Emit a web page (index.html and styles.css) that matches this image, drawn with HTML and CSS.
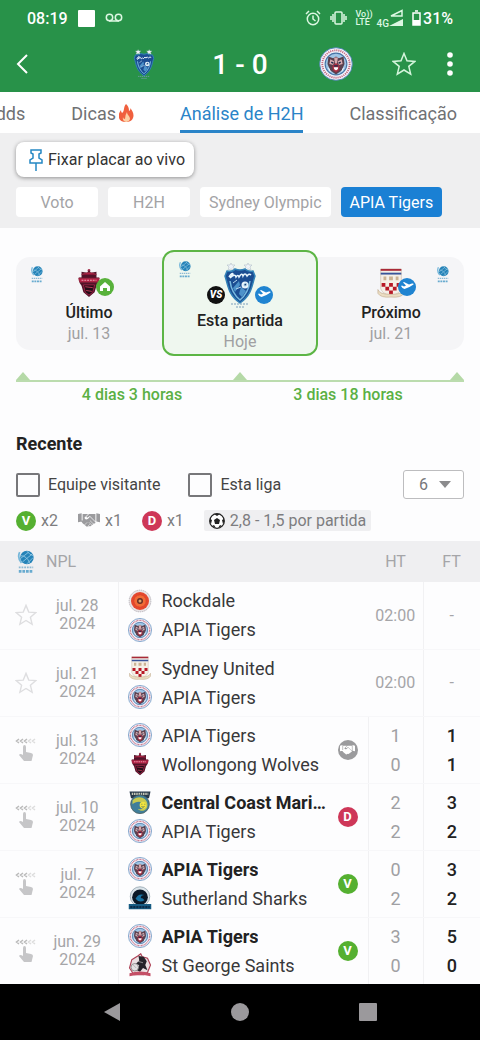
FILE: index.html
```
<!DOCTYPE html>
<html lang="pt">
<head>
    <meta charset="UTF-8">
    <meta name="viewport" content="width=device-width, initial-scale=1.0">
    <title>Análise de H2H</title>
    <link rel="stylesheet" href="styles.css">
</head>
<body>
    <!-- Shared icons and crests -->
    <svg class="sprite" aria-hidden="true">
        <symbol id="olympic" viewBox="0 0 38 46">
            <path d="M10 1l1 2 3 0-2 2 1 3-3-1-3 1 1-3-2-2 3 0zM27 1l1 2 3 0-2 2 1 3-3-1-3 1 1-3-2-2 3 0z" fill="#eef3f8" stroke="#b4bfc9" stroke-width=".6"/>
            <path d="M6 9q6 1 8-2 5 2 10 0 3 3 8 2l2 5c-3 9-3 19-15 27C7 33 7 23 4 14z" fill="#1b4d92" stroke="#3282b8" stroke-width="1.5"/>
            <path d="M9 19c1 8 4 14 10 19 6-5 9-11 10-19" fill="none" stroke="#79bce0" stroke-width="1.5"/>
            <path d="M8 15q3-5 4-3l-3 4q5-5 6-1 2-3 3 0 3-5 4-1 2-4 4 0 2-3 4-1" fill="none" stroke="#e8f5fd" stroke-width="1.5"/>
            <path d="M12 26l6-7 1 4-5 7zM18 32l2-7 5 4-4 6z" fill="#4d92ca"/>
            <circle cx="24" cy="23" r="3.5" fill="#e9f4fb"/>
            <path d="M24 21l2 1-1 2-2 0 0-2zM12 21l4-3M15 27l5-2" fill="#173e70" stroke="#b9daf0"/>
            <path d="M10 42h18M15 45h8" stroke="#7d9fbc" stroke-width="1.2" stroke-dasharray="2 1"/>
        </symbol>
        <symbol id="apia" viewBox="0 0 36 36">
            <circle cx="18" cy="18" r="17.3" fill="#f3f3fa" stroke="#4f82b6" stroke-width="1"/>
            <circle cx="18" cy="18" r="14.5" fill="none" stroke="#c4657c" stroke-width="2" stroke-dasharray="1.2 1"/>
            <circle cx="18" cy="18" r="11.5" fill="#9fc6e6" stroke="#4674a6" stroke-width="1.2"/>
            <path d="M10 10l5 2 3-2 3 2 5-2 1 8-3 7-6 4-6-4-3-7z" fill="#5a414f"/>
            <path d="M12 13l4 2-1 4-4-1zM24 13l-4 2 1 4 4-1zM16 11h4l-1 7h-2z" fill="#d8a9ae"/>
            <path d="M14 20l4-3 4 3-1 5-3 2-3-2z" fill="#a82d42"/>
            <path d="M16 22h4l-1 2h-2zM10 22l2 4M26 22l-2 4" fill="#fff" stroke="#fff"/>
            <path d="M13 16l2 1M23 16l-2 1M16 20h4" stroke="#172d4f" stroke-width="1.5"/>
        </symbol>
        <symbol id="wolves" viewBox="0 0 30 32">
            <circle cx="15" cy="2.5" r="1.5" fill="#a83a55"/>
            <path d="M15 2l2 3 6-1v6h3l-1 6-2 3-2 7-6 5-6-5-2-7-2-3-1-6h3V4l6 1z" fill="#521329"/>
            <path d="M7 7q8-4 16 0M4 11h22l-1 4H5z" fill="#b81d45" stroke="#9a2a43"/>
            <path d="M7 13h16" stroke="#e9a4b0" stroke-width="1.2" stroke-dasharray="2 1"/>
            <path d="M9 18h12l-2 8-4 3-4-3z" fill="#240d18" stroke="#a02547"/>
            <path d="M11 20l8 1M12 24l6 1" stroke="#c33b57"/>
        </symbol>
        <symbol id="united" viewBox="0 0 32 32">
            <path d="M5 1h22v21c-2 5-6 6-11 8-5-2-9-3-11-8z" fill="#f5efe7" stroke="#c8b6a3" stroke-width=".6"/>
            <path d="M5 1h22v2H5z" fill="#a92938"/>
            <path d="M5 5h22v2H5z" fill="#39549a"/>
            <path d="M8 11h3M14 11h4M21 11h3" stroke="#cbb293" stroke-width="4"/>
            <path d="M6 16h4v4H6zM14 16h4v4h-4zM22 16h4v4h-4zM10 20h4v4h-4zM18 20h4v4h-4zM14 24h4v4h-4z" fill="#b81827"/>
            <path d="M2 23q2 5 12 5h4q10 0 12-5v4q-3 5-14 4Q5 32 2 27z" fill="#eadcc2" stroke="#bda687" stroke-width=".6"/>
        </symbol>
        <symbol id="rockdale" viewBox="0 0 32 32">
            <circle cx="16" cy="16" r="14.5" fill="#e8e4e6" stroke="#aaa6ad" stroke-dasharray="2 1"/>
            <circle cx="16" cy="16" r="12" fill="#e4472d"/>
            <circle cx="16" cy="16" r="8" fill="#f16b36" stroke="#d13a28" stroke-dasharray="1 1"/>
            <circle cx="16" cy="16" r="4" fill="#692f25"/>
            <circle cx="16" cy="16" r="2" fill="#dda66f"/>
        </symbol>
        <symbol id="mariners" viewBox="0 0 32 32">
            <path d="M2 2h28l-2 9H4z" fill="#28394b"/>
            <path d="M5 5h22" stroke="#c7c9b8" stroke-width="3" stroke-dasharray="2 1"/>
            <circle cx="16" cy="19" r="12.5" fill="#3f7e9a" stroke="#4a5a58"/>
            <path d="M6 14c7-8 20-4 20 6 0 8-9 10-13 5 8 3 10-4 6-8-4-3-10-1-13 2z" fill="#c8ca50"/>
            <circle cx="20" cy="20" r="4.5" fill="#f2e43f"/>
            <path d="M18 19h1M22 19h1M18 22q2 2 4 0" stroke="#365a57" fill="none"/>
        </symbol>
        <symbol id="sharks" viewBox="0 0 32 32">
            <circle cx="16" cy="14" r="13" fill="#dce5eb" stroke="#8b9da8"/>
            <circle cx="16" cy="15" r="10.5" fill="#0a1928"/>
            <path d="M10 17q4-8 12-5-5 0-5 4 3 0 5 3-7 4-12-2z" fill="#1973a3"/>
            <path d="M1 24h30v7H1z" fill="#175c83"/>
            <path d="M3 28h26" stroke="#0b2b48" stroke-width="3" stroke-dasharray="3 1"/>
        </symbol>
        <symbol id="saints" viewBox="0 0 32 32">
            <path d="M5 9l8-5 4-3 2 4 7 2 4 9-4 10-5 3H8l-6-9z" fill="#eadfe2" stroke="#ad4055" stroke-width="1.5"/>
            <path d="M14 4l7 1 4 6-2 5 3 7-6-3-4 5-4-2 3-7-5-1 5-5z" fill="#25232a"/>
            <circle cx="9" cy="19" r="5" fill="#e4e1e3" stroke="#777"/>
            <path d="M7 16l4 4M13 11l7 2" stroke="#aaa"/>
            <path d="M2 27q14-5 28 0v4q-14-4-28 0z" fill="#c44f66"/>
        </symbol>
        <symbol id="league" viewBox="0 0 20 26">
            <circle cx="11" cy="8" r="7.5" fill="#2583b8"/>
            <path d="M4 9l9-7M6 13l11-9M11 15l7-7M4 6q7 0 10 8M11 1q3 4 7 5" stroke="#a5d2ea" stroke-width=".8" fill="none"/>
            <path d="M3 2q-3 6 2 12" stroke="#76b7da" stroke-width="2" fill="none"/>
            <path d="M2 19h16" stroke="#8db9d2" stroke-width="2" stroke-dasharray="2 1"/>
            <path d="M2 23.5h16" stroke="#68abcf" stroke-width="3" stroke-dasharray="3 1"/>
        </symbol>
        <symbol id="star" viewBox="0 0 24 24">
            <path d="M12 1.5l3 7.3 7.8.6-6 5 1.9 7.7L12 18l-6.700 4.100 1.900-7.700-6-5 7.800-.6z" fill="none" stroke="currentColor" stroke-width="1.5"/>
        </symbol>
        <symbol id="handshake" viewBox="0 0 24 16">
            <path d="M0 1l4-1v9l-4 1zM20 0l4 1v9l-4-1zM5 1l6 0-4 4q1 3 4 1l2-2 6 6q0 2-2 1 0 2-2 2-1 2-3 1l-2 1-5-4-2-3H5zM12 1l7 0v8l-6-6-3 2-1-1z" fill="currentColor"/>
            <path d="M7 13l3-3M10 15l3-3M13 8l4 4M12 10l3 3" stroke="#fff" stroke-width=".6"/>
        </symbol>
        <symbol id="touch" viewBox="0 0 22 24">
            <path d="M4 1L1.500 3 4 5M8 1L5.500 3 8 5M12 1L9.500 3 12 5" fill="none" stroke="#bbb" stroke-width="1.5"/>
            <path d="M16 1l-2.500 2L16 5M20 1l-2.500 2L20 5" fill="none" stroke="#ddd" stroke-width="1.5"/>
            <path d="M8 9q0-2 1.500-2T11 9v5l5 1q2 .5 2 2l-1.500 6H9l-5-6q1-2 4 0z" fill="#c6c6c8"/>
        </symbol>
        <symbol id="plane" viewBox="0 0 18 18">
            <circle cx="9" cy="9" r="9" fill="#2084d1"/>
            <path d="M3 8l1-.5 2 1 2-1-3-3 1-.5 5 2.500 3-1q2-.5 1.500 1-4 3-9 4.500Q4.500 11 3 8z" fill="#fff"/>
        </symbol>
    </svg>

    <header class="top">
        <div class="status">
            <div class="status-side">
                <span>08:19</span>
                <span class="square"></span>
                <svg width="18" height="10" viewBox="0 0 18 10" fill="none" stroke="#dcf7e2" stroke-width="1.5"><circle cx="4.5" cy="4.5" r="3.2"/><circle cx="13.5" cy="4.5" r="3.2"/><path d="M4 8h10"/></svg>
            </div>
            <div class="status-side status-right">
                <svg width="16" height="16" viewBox="0 0 16 16" fill="none" stroke="#dcf7e2" stroke-width="1.5"><circle cx="8" cy="9" r="5.7"/><path d="M8 5.500V9l2.500 2M1 4l3-3M15 4l-3-3"/></svg>
                <svg class="vibrate" width="17" height="14" viewBox="0 0 17 14" fill="none" stroke="#dcf7e2" stroke-width="1.5"><rect x="5" y="1" width="7" height="12" rx="1"/><path d="M3 3v8M14 3v8M1 5v4M16 5v4"/></svg>
                <span class="volte">Vo))<br>LTE</span>
                <span class="net">4G</span>
                <svg width="14" height="18" viewBox="0 0 14 18" fill="#dcf7e2"><path d="M0 17L14 10v7z"/><path d="M2 7l11-5.500V7z" fill="none" stroke="#dcf7e2" stroke-width="1.5"/></svg>
                <svg class="battery" width="9" height="16" viewBox="0 0 9 16"><path d="M3 1h3M1 3h7v12H1z" fill="none" stroke="#fff" stroke-width="1.5"/><path d="M1 10h7v5H1z" fill="#fff"/></svg>
                <span>31%</span>
            </div>
        </div>
        <div class="match-bar">
            <button class="icon-btn back" aria-label="Voltar">
                <svg width="12" height="20" viewBox="0 0 12 20" fill="none" stroke="#fff" stroke-width="2"><path d="M11 1L2 10l9 9"/></svg>
            </button>
            <div class="score">
                <svg width="34" height="30"><use href="#olympic"/></svg>
                <h1>1 - 0</h1>
                <svg width="34" height="34"><use href="#apia"/></svg>
            </div>
            <div class="actions">
                <button class="icon-btn" aria-label="Favorito"><svg width="24" height="24"><use href="#star"/></svg></button>
                <button class="icon-btn" aria-label="Mais">
                    <svg width="6" height="24" viewBox="0 0 6 24" fill="#fff"><circle cx="3" cy="3" r="2.8"/><circle cx="3" cy="12" r="2.8"/><circle cx="3" cy="21" r="2.8"/></svg>
                </button>
            </div>
        </div>
    </header>

    <nav class="tabs">
        <a href="#odds">Odds</a>
        <a href="#dicas">Dicas
            <svg width="15" height="18" viewBox="0 0 15 18"><path d="M7 0c3 3 3 5 3 7q2-1 1-3c6 6 4 14-4 14S-2 11 2 6q0 2 1 3C6 7 4 3 7 0z" fill="#f0603e"/><path d="M8 8c0 3 3 4 3 7q-1 3-4 3-4-1-3-5 0 2 2 2 0-4 2-7z" fill="#fdd0a4"/></svg>
        </a>
        <a href="#h2h" class="active">Análise de H2H</a>
        <a href="#tabela">Classificação</a>
    </nav>

    <section class="filters">
        <button class="pin-btn">
            <svg width="14" height="22" viewBox="0 0 14 22" fill="none" stroke="#2588c4" stroke-width="1.5"><path d="M2 1h10v3l-2 1v4l3 2v3H1v-3l3-2V5L2 4zM7 14v8"/></svg>
            Fixar placar ao vivo
        </button>
        <div class="chips">
            <button class="chip">Voto</button>
            <button class="chip">H2H</button>
            <button class="chip">Sydney Olympic</button>
            <button class="chip selected">APIA Tigers</button>
        </div>
    </section>

    <main>
        <!-- Previous / current / next match -->
        <section class="schedule">
            <div class="cards">
                <div class="card first">
                    <svg class="card-league"><use href="#league"/></svg>
                    <div class="card-crest">
                        <svg width="28" height="30"><use href="#wolves"/></svg>
                        <svg class="venue" viewBox="0 0 18 18"><circle cx="9" cy="9" r="9" fill="#58b13b"/><path d="M9 4l5 4.500V13h-3v-3H7v3H4V8.500z" fill="#fff"/></svg>
                    </div>
                    <h3>Último</h3>
                    <p>jul. 13</p>
                </div>
                <div class="card current">
                    <svg class="card-league"><use href="#league"/></svg>
                    <div class="card-crest">
                        <span class="versus">VS</span>
                        <svg width="38" height="46"><use href="#olympic"/></svg>
                        <svg class="venue"><use href="#plane"/></svg>
                    </div>
                    <h3>Esta partida</h3>
                    <p>Hoje</p>
                </div>
                <div class="card last">
                    <svg class="card-league"><use href="#league"/></svg>
                    <div class="card-crest">
                        <svg width="30" height="32"><use href="#united"/></svg>
                        <svg class="venue"><use href="#plane"/></svg>
                    </div>
                    <h3>Próximo</h3>
                    <p>jul. 21</p>
                </div>
            </div>
            <div class="timeline"><i></i><i></i><i></i></div>
            <div class="gaps">
                <span>4 dias 3 horas</span>
                <span>3 dias 18 horas</span>
            </div>
        </section>

        <section class="recent">
            <h2>Recente</h2>
            <div class="options">
                <label><input type="checkbox"> Equipe visitante</label>
                <label><input type="checkbox"> Esta liga</label>
                <div class="count">
                    <select aria-label="Partidas">
                        <option>6</option>
                        <option>10</option>
                        <option>20</option>
                    </select>
                </div>
            </div>
            <div class="stats">
                <span class="stat"><b class="badge win">V</b> x2</span>
                <span class="stat draws"><svg width="22" height="15"><use href="#handshake"/></svg> x1</span>
                <span class="stat"><b class="badge loss">D</b> x1</span>
                <span class="goals">
                    <svg width="16" height="16" viewBox="0 0 16 16"><circle cx="8" cy="8" r="7.3" fill="#fff" stroke="#222" stroke-width="1.3"/><path d="M8 5l3 2-1 4H6L5 7zM5 1h6L8 3zM1 6l2 1-1 4-1-2zM15 6l-2 1 1 4 1-2zM3 13l2-1 2 3zM13 13l-2-1-2 3z" fill="#222"/></svg>
                    2,8 - 1,5 por partida
                </span>
            </div>
        </section>

        <table class="matches">
            <colgroup>
                <col class="col-mark"><col class="col-date"><col><col class="col-ht"><col class="col-ft">
            </colgroup>
            <thead>
                <tr>
                    <th colspan="3" class="league"><div><svg width="18" height="24"><use href="#league"/></svg> NPL</div></th>
                    <th>HT</th>
                    <th>FT</th>
                </tr>
            </thead>
            <tbody>
                <tr class="upcoming">
                    <td><svg class="mark"><use href="#star"/></svg></td>
                    <td class="date">jul. 28<br>2024</td>
                    <td><div class="pair"><div class="teams">
                        <div class="team"><svg><use href="#rockdale"/></svg><span>Rockdale</span></div>
                        <div class="team"><svg><use href="#apia"/></svg><span>APIA Tigers</span></div>
                    </div></div></td>
                    <td class="time">02:00</td>
                    <td class="time">-</td>
                </tr>
                <tr class="upcoming">
                    <td><svg class="mark"><use href="#star"/></svg></td>
                    <td class="date">jul. 21<br>2024</td>
                    <td><div class="pair"><div class="teams">
                        <div class="team"><svg><use href="#united"/></svg><span>Sydney United</span></div>
                        <div class="team"><svg><use href="#apia"/></svg><span>APIA Tigers</span></div>
                    </div></div></td>
                    <td class="time">02:00</td>
                    <td class="time">-</td>
                </tr>
                <tr>
                    <td><svg class="mark"><use href="#touch"/></svg></td>
                    <td class="date">jul. 13<br>2024</td>
                    <td><div class="pair"><div class="teams">
                        <div class="team"><svg><use href="#apia"/></svg><span>APIA Tigers</span></div>
                        <div class="team"><svg><use href="#wolves"/></svg><span>Wollongong Wolves</span></div>
                    </div><b class="badge draw"><svg width="15" height="10"><use href="#handshake"/></svg></b></div></td>
                    <td class="ht">1<br>0</td>
                    <td class="ft">1<br>1</td>
                </tr>
                <tr>
                    <td><svg class="mark"><use href="#touch"/></svg></td>
                    <td class="date">jul. 10<br>2024</td>
                    <td><div class="pair"><div class="teams">
                        <div class="team winner"><svg><use href="#mariners"/></svg><span>Central Coast Mariners</span></div>
                        <div class="team"><svg><use href="#apia"/></svg><span>APIA Tigers</span></div>
                    </div><b class="badge loss">D</b></div></td>
                    <td class="ht">2<br>2</td>
                    <td class="ft">3<br>2</td>
                </tr>
                <tr>
                    <td><svg class="mark"><use href="#touch"/></svg></td>
                    <td class="date">jul. 7<br>2024</td>
                    <td><div class="pair"><div class="teams">
                        <div class="team winner"><svg><use href="#apia"/></svg><span>APIA Tigers</span></div>
                        <div class="team"><svg><use href="#sharks"/></svg><span>Sutherland Sharks</span></div>
                    </div><b class="badge win">V</b></div></td>
                    <td class="ht">0<br>2</td>
                    <td class="ft">3<br>2</td>
                </tr>
                <tr>
                    <td><svg class="mark"><use href="#touch"/></svg></td>
                    <td class="date">jun. 29<br>2024</td>
                    <td><div class="pair"><div class="teams">
                        <div class="team winner"><svg><use href="#apia"/></svg><span>APIA Tigers</span></div>
                        <div class="team"><svg><use href="#saints"/></svg><span>St George Saints</span></div>
                    </div><b class="badge win">V</b></div></td>
                    <td class="ht">3<br>0</td>
                    <td class="ft">5<br>0</td>
                </tr>
            </tbody>
        </table>
    </main>

    <footer class="system-nav">
        <button aria-label="Voltar"><svg width="18" height="20" viewBox="0 0 18 20"><path d="M17 1v18L1 10z" fill="#9b999c"/></svg></button>
        <button aria-label="Início"><svg width="18" height="18" viewBox="0 0 18 18"><circle cx="9" cy="9" r="9" fill="#9b999c"/></svg></button>
        <button aria-label="Recentes"><svg width="18" height="18" viewBox="0 0 18 18"><rect width="18" height="18" rx="1" fill="#9b999c"/></svg></button>
    </footer>
</body>
</html>
```
FILE: styles.css
```
* {
    box-sizing: border-box;
}
body {
    font-family: Roboto, "Liberation Sans", sans-serif;
    margin: 0;
    min-height: 100vh;
    display: flex;
    flex-direction: column;
    background: #fdfdfe;
    color: #333;
    font-size: 16px;
}
h1, h2, h3, p {
    margin: 0;
}
svg {
    display: block;
    flex: none;
}
button {
    font-family: inherit;
    border: none;
    padding: 0;
    cursor: pointer;
}
.sprite {
    position: absolute;
    width: 0;
    height: 0;
}

/* header */
.top {
    background: #289249;
    color: #fff;
}
.status {
    display: flex;
    justify-content: space-between;
    height: 36px;
    padding: 0 27px;
    font-weight: 500;
}
.status-side {
    display: flex;
    align-items: center;
    gap: 10px;
}
.status-right {
    gap: 0;
}
.square {
    width: 17px;
    height: 17px;
    background: #fff;
    border-radius: 1px;
}
.vibrate {
    margin: 0 9px;
}
.volte {
    font-size: 9px;
    line-height: 8px;
    color: #dcf7e2;
}
.net {
    font-size: 10px;
    align-self: flex-end;
    padding-bottom: 7px;
    margin-left: 4px;
    color: #dcf7e2;
}
.battery {
    margin: 0 2px 0 9px;
}
.match-bar {
    display: grid;
    grid-template-columns: 1fr auto 1fr;
    align-items: center;
    height: 56px;
    padding: 0 16px;
}
.icon-btn {
    display: flex;
    align-items: center;
    justify-content: center;
    width: 28px;
    height: 40px;
    background: none;
    color: #d5f5dc;
}
.back {
    justify-content: flex-start;
}
.score {
    display: flex;
    align-items: center;
}
.score h1 {
    width: 158px;
    text-align: center;
    font-size: 28px;
    font-weight: 500;
}
.actions {
    display: flex;
    justify-content: flex-end;
    gap: 18px;
}

/* tabs */
.tabs {
    display: flex;
    justify-content: flex-end;
    gap: 46px;
    height: 41px;
    padding-right: 23px;
    overflow: hidden;
    background: #fff;
}
.tabs a {
    display: flex;
    align-items: center;
    gap: 3px;
    padding-top: 4px;
    border-bottom: 3px solid transparent;
    white-space: nowrap;
    color: #707174;
    font-size: 18px;
    text-decoration: none;
}
.tabs .active {
    color: #2a84c8;
    border-bottom-color: #2a84c8;
}

/* filters */
.filters {
    background: #efeff0;
    padding: 9px 16px 11px;
}
.pin-btn {
    display: flex;
    align-items: center;
    gap: 5px;
    height: 35px;
    padding: 0 9px 0 13px;
    background: #fff;
    border-radius: 8px;
    box-shadow: 0 1px 4px rgba(0, 0, 0, 0.4);
    color: #333;
    font-size: 16px;
}
.chips {
    display: flex;
    gap: 10px;
    margin-top: 10px;
}
.chip {
    min-width: 82px;
    height: 30px;
    padding: 0 9px;
    background: #fff;
    border-radius: 4px;
    color: #a3a3a6;
    font-size: 16px;
    white-space: nowrap;
}
.chip.selected {
    background: #1a80d4;
    color: #fff;
}

/* schedule */
.schedule {
    padding: 22px 16px 0;
}
.cards {
    display: grid;
    grid-template-columns: 1fr 156px 1fr;
    align-items: center;
}
.card {
    position: relative;
    height: 93px;
    padding-top: 9px;
    background: #f5f5f7;
    text-align: center;
}
.card.first {
    border-radius: 14px 0 0 14px;
}
.card.last {
    border-radius: 0 14px 14px 0;
}
.card.current {
    height: 106px;
    padding-top: 10px;
    background: #eff7ef;
    border: 2px solid #5cb545;
    border-radius: 12px;
}
.card-league {
    position: absolute;
    top: 9px;
    left: 14px;
    width: 14px;
    height: 17px;
}
.last .card-league {
    left: auto;
    right: 14px;
}
.card-crest {
    position: relative;
    display: flex;
    align-items: center;
    justify-content: center;
    width: 66px;
    height: 34px;
    margin: 0 auto 1px;
}
.current .card-crest {
    height: 46px;
}
.venue {
    position: absolute;
    right: 8px;
    bottom: 4px;
    width: 18px;
    height: 18px;
}
.current .venue {
    right: 0;
}
.versus {
    position: absolute;
    left: 0;
    bottom: 4px;
    width: 18px;
    height: 18px;
    border-radius: 50%;
    background: #111;
    color: #fff;
    font-size: 10px;
    font-style: italic;
    font-weight: 900;
    line-height: 18px;
}
.card h3 {
    font-size: 16px;
    font-weight: 500;
    line-height: 23px;
    color: #222;
}
.card p {
    font-size: 16px;
    line-height: 20px;
    color: #a0a0a2;
}
.timeline {
    display: flex;
    justify-content: space-between;
    margin-top: 16px;
    border-bottom: 2px solid #bbdcae;
}
.timeline i {
    border: 7px solid transparent;
    border-top: none;
    border-bottom: 8px solid #b5d9a7;
}
.gaps {
    display: grid;
    grid-template-columns: 1fr 1fr;
    padding: 3px 8px 0;
    text-align: center;
    color: #5bb044;
    font-size: 16px;
    font-weight: 500;
    line-height: 20px;
}

/* recent */
.recent {
    padding: 28px 16px 10px;
}
.recent h2 {
    font-size: 18px;
    font-weight: 700;
    line-height: 22px;
    color: #222;
}
.options {
    display: flex;
    align-items: center;
    margin-top: 15px;
    gap: 28px;
}
.options label {
    display: flex;
    align-items: center;
    gap: 8px;
    color: #444;
}
.options input {
    appearance: none;
    width: 24px;
    height: 24px;
    margin: 0;
    border: 2px solid #77777a;
    border-radius: 2px;
}
.count {
    position: relative;
    margin-left: auto;
}
.count select {
    appearance: none;
    width: 61px;
    height: 29px;
    padding: 0 0 0 15px;
    background: #fff;
    border: 1px solid #bdbdbf;
    border-radius: 3px;
    color: #77777a;
    font-family: inherit;
    font-size: 16px;
}
.count::after {
    content: "";
    position: absolute;
    right: 13px;
    top: 11px;
    border: 6px solid transparent;
    border-top: 7px solid #8b8b8d;
    border-bottom: none;
    pointer-events: none;
}
.stats {
    display: flex;
    align-items: center;
    margin-top: 11px;
    gap: 20px;
    color: #7d7d80;
}
.stat {
    display: flex;
    align-items: center;
    gap: 5px;
}
.draws svg {
    color: #9b9b9e;
}
.goals {
    display: flex;
    align-items: center;
    gap: 5px;
    height: 21px;
    padding: 0 5px;
    background: #efeff1;
    border-radius: 2px;
}
.badge {
    display: flex;
    align-items: center;
    justify-content: center;
    flex: none;
    width: 20px;
    height: 20px;
    border-radius: 50%;
    color: #fff;
    font-size: 13px;
    font-weight: 700;
}
.win {
    background: #55b031;
}
.loss {
    background: #ce3758;
}
.draw {
    background: #9b9b9d;
}

/* matches */
.matches {
    width: 100%;
    table-layout: fixed;
    border-collapse: collapse;
}
.col-mark {
    width: 48px;
}
.col-date {
    width: 70px;
}
.col-ht {
    width: 55px;
}
.col-ft {
    width: 57px;
}
.matches th {
    height: 41px;
    padding: 0;
    background: #efeff1;
    color: #a5a5a8;
    font-weight: 400;
}
.league div {
    display: flex;
    align-items: center;
    gap: 11px;
    padding-left: 17px;
}
.matches td {
    height: 67px;
    padding: 0;
    text-align: center;
    border-bottom: 1px solid #f7f7f9;
}
.matches td:nth-child(n+3) {
    border-left: 1px solid #f1f1f3;
}
.matches .upcoming td:nth-child(4) {
    border-left: none;
}
.matches tr:last-child td {
    border-bottom: none;
}
.mark {
    width: 22px;
    height: 24px;
    margin-left: 15px;
    color: #dedee0;
}
.matches .date {
    padding: 0 11px 0 0;
    color: #a5a5a8;
    line-height: 18px;
}
.pair {
    display: flex;
    align-items: center;
    padding: 0 10px 0 9px;
}
.teams {
    flex: 1;
    min-width: 0;
}
.team {
    display: flex;
    align-items: center;
    gap: 10px;
    height: 29px;
    padding-right: 8px;
    font-size: 18px;
    color: #38383a;
}
.team svg {
    width: 24px;
    height: 24px;
}
.team span {
    overflow: hidden;
    text-overflow: ellipsis;
    white-space: nowrap;
}
.winner {
    font-weight: 700;
    color: #222;
}
.time {
    color: #a5a5a8;
}
.ht, .ft {
    font-size: 18px;
    line-height: 29px;
    color: #a0a0a3;
}
.ft {
    color: #222;
    font-weight: 500;
}

/* system navigation */
.system-nav {
    display: flex;
    justify-content: center;
    gap: 110px;
    margin-top: auto;
    height: 56px;
    background: #000;
}
.system-nav button {
    display: flex;
    align-items: center;
    background: none;
}
```
